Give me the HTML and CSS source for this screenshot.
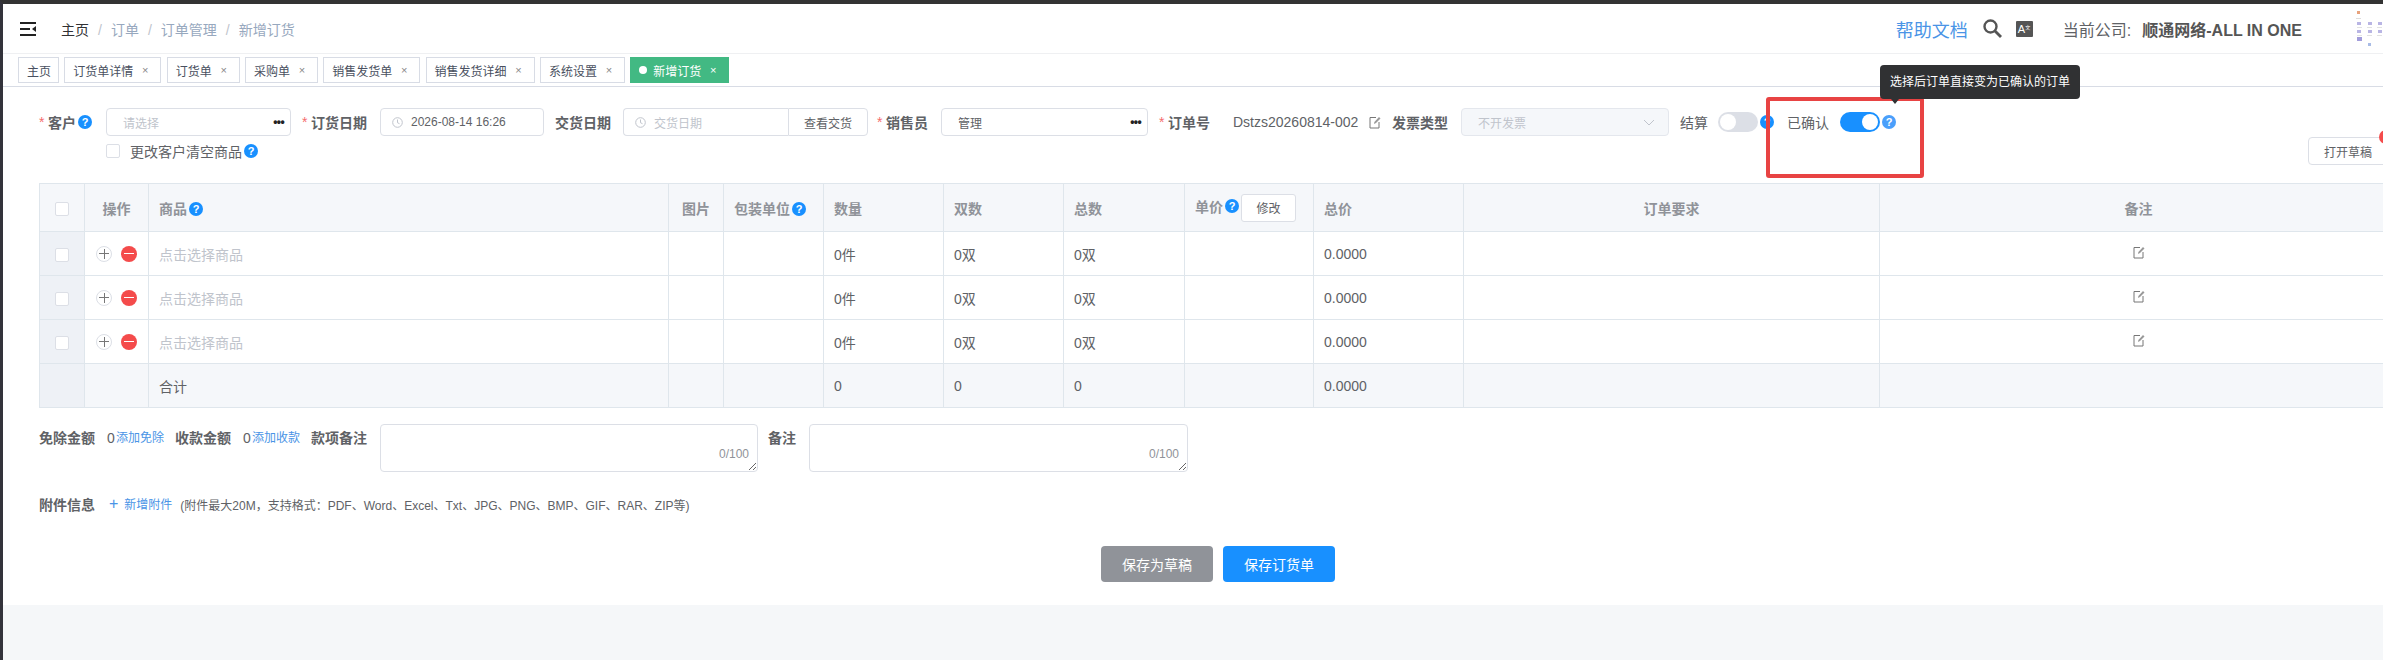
FILE: index.html
```html
<!DOCTYPE html>
<html lang="zh-CN">
<head>
  <meta charset="UTF-8" />
  <title>新增订货</title>
  <link rel="stylesheet" href="styles.css">
</head>
<body>
<div class="app">

  <!-- Top bar -->
  <header class="navbar">
    <svg class="hamburger" width="16" height="14" viewBox="0 0 16 14"><path d="M0 1h16M0 7h10M0 13h16" stroke="#222" stroke-width="2" fill="none"/><path d="M16 4v6l-4-3z" fill="#222"/></svg>
    <div class="crumbs">
      <span class="crumb-home">主页</span><i>/</i><span>订单</span><i>/</i><span>订单管理</span><i>/</i><span>新增订货</span>
    </div>
    <div class="nav-right">
      <a class="help-link">帮助文档</a>
      <svg class="search-icon" width="19" height="19" viewBox="0 0 19 19"><circle cx="7.5" cy="7.5" r="6" stroke="#555" stroke-width="2.4" fill="none"/><path d="M12 12l6 6" stroke="#555" stroke-width="2.8"/></svg>
      <div class="size-icon">A<sup>文</sup></div>
      <span class="company-label">当前公司:</span>
      <span class="company-name">顺通网络-ALL IN ONE</span>
      <svg class="avatar" width="29" height="38" viewBox="0 0 29 38">
        <rect x="3" y="1" width="3" height="3" fill="#e8a27c"/>
        <rect x="2" y="8" width="5" height="1" fill="#ddd"/>
        <rect x="3" y="12" width="4" height="3" fill="#b9b5e4"/><rect x="14" y="12" width="4" height="3" fill="#b9b5e4"/><rect x="24" y="12" width="4" height="3" fill="#b9b5e4"/>
        <rect x="3" y="17" width="5" height="1" fill="#e2e2e2"/><rect x="13" y="17" width="5" height="1" fill="#e2e2e2"/><rect x="23" y="17" width="5" height="1" fill="#e2e2e2"/>
        <rect x="3" y="20" width="4" height="3" fill="#b9b5e4"/><rect x="14" y="20" width="4" height="3" fill="#b9b5e4"/><rect x="24" y="20" width="4" height="3" fill="#b9b5e4"/>
        <rect x="3" y="25" width="5" height="1" fill="#e2e2e2"/><rect x="13" y="25" width="5" height="1" fill="#e2e2e2"/><rect x="23" y="25" width="5" height="1" fill="#e2e2e2"/>
        <rect x="3" y="27" width="5" height="4" fill="#a29ddb"/><rect x="14" y="33" width="3" height="3" fill="#a9bce6"/>
      </svg>
    </div>
  </header>

  <!-- Opened pages -->
  <div class="tabs">
    <span class="tab">主页</span>
    <span class="tab">订货单详情<b>×</b></span>
    <span class="tab">订货单<b>×</b></span>
    <span class="tab">采购单<b>×</b></span>
    <span class="tab">销售发货单<b>×</b></span>
    <span class="tab">销售发货详细<b>×</b></span>
    <span class="tab">系统设置<b>×</b></span>
    <span class="tab active"><em></em>新增订货<b>×</b></span>
  </div>

  <main class="content">
    <div class="form-row">
      <div class="field">
        <label class="lb w67"><i>*</i>客户<span class="tip">?</span></label>
        <div class="input w185"><span class="ph">请选择</span><span class="more">•••</span></div>
      </div>
      <div class="field">
        <label class="lb w78"><i>*</i>订货日期</label>
        <div class="input date w164">
          <svg width="11" height="11" viewBox="0 0 11 11"><circle cx="5.5" cy="5.5" r="4.8" stroke="#c0c4cc" fill="none"/><path d="M5.5 2.5v3.2l2 1" stroke="#c0c4cc" fill="none"/></svg>
          <span>2026-08-14 16:26</span>
        </div>
      </div>
      <div class="field mr9">
        <label class="lb w68 plain-start">交货日期</label>
        <div class="input date w165 joined">
          <svg width="11" height="11" viewBox="0 0 11 11"><circle cx="5.5" cy="5.5" r="4.8" stroke="#c0c4cc" fill="none"/><path d="M5.5 2.5v3.2l2 1" stroke="#c0c4cc" fill="none"/></svg>
          <span class="ph">交货日期</span>
        </div>
        <button class="btn-append">查看交货</button>
      </div>
      <div class="field">
        <label class="lb w64"><i>*</i>销售员</label>
        <div class="input w207"><span class="val">管理</span><span class="more">•••</span></div>
      </div>
      <div class="field mr0">
        <label class="lb w74"><i>*</i>订单号</label>
        <div class="order-no">Dstzs20260814-002
          <svg class="edit" width="12" height="13" viewBox="0 0 12 13"><path d="M7 1.5H1v10.500h9V6" stroke="#777" fill="none"/><path d="M5 8l.4-2L10 1l1.500 1.500L7 7z" fill="#999"/></svg>
        </div>
      </div>
      <div class="field">
        <label class="lb w69 plain-start">发票类型</label>
        <div class="input disabled w208"><span class="ph">不开发票</span>
          <svg width="12" height="7" viewBox="0 0 12 7"><path d="M1 1l5 5 5-5" stroke="#c0c4cc" fill="none"/></svg>
        </div>
      </div>
      <div class="field mr13">
        <span class="sw-label w38">结算</span>
        <span class="switch"></span>
        <span class="tip">?</span>
      </div>
      <div class="field">
        <span class="sw-label w53">已确认</span>
        <span class="switch on"></span>
        <span class="tip light">?</span>
      </div>
    </div>

    <div class="form-row second">
      <label class="check-line"><span class="checkbox"></span>更改客户清空商品<span class="tip">?</span></label>
      <button class="btn-draft">打开草稿</button>
    </div>

    <table class="grid">
      <colgroup>
        <col class="c1"><col class="c2"><col class="c3"><col class="c4"><col class="c5"><col class="c6">
        <col class="c7"><col class="c8"><col class="c9"><col class="c10"><col class="c11"><col class="c12">
      </colgroup>
      <thead>
        <tr>
          <th class="center"><span class="checkbox"></span></th>
          <th class="center">操作</th>
          <th>商品<span class="tip">?</span></th>
          <th class="center">图片</th>
          <th>包装单位<span class="tip">?</span></th>
          <th>数量</th>
          <th>双数</th>
          <th>总数</th>
          <th>单价<span class="tip">?</span><button class="btn-edit">修改</button></th>
          <th>总价</th>
          <th class="center">订单要求</th>
          <th class="center">备注</th>
        </tr>
      </thead>
      <tbody>
        <tr>
          <td class="center side"><span class="checkbox"></span></td>
          <td><div class="ops"><span class="op-add"></span><span class="op-del"></span></div></td>
          <td class="ph">点击选择商品</td><td></td><td></td>
          <td>0件</td><td>0双</td><td>0双</td><td></td><td>0.0000</td><td></td>
          <td class="center"><svg class="edit" width="12" height="13" viewBox="0 0 12 13"><path d="M7 1.5H1v10.500h9V6" stroke="#777" fill="none"/><path d="M5 8l.4-2L10 1l1.500 1.500L7 7z" fill="#999"/></svg></td>
        </tr>
        <tr>
          <td class="center side"><span class="checkbox"></span></td>
          <td><div class="ops"><span class="op-add"></span><span class="op-del"></span></div></td>
          <td class="ph">点击选择商品</td><td></td><td></td>
          <td>0件</td><td>0双</td><td>0双</td><td></td><td>0.0000</td><td></td>
          <td class="center"><svg class="edit" width="12" height="13" viewBox="0 0 12 13"><path d="M7 1.5H1v10.500h9V6" stroke="#777" fill="none"/><path d="M5 8l.4-2L10 1l1.500 1.500L7 7z" fill="#999"/></svg></td>
        </tr>
        <tr>
          <td class="center side"><span class="checkbox"></span></td>
          <td><div class="ops"><span class="op-add"></span><span class="op-del"></span></div></td>
          <td class="ph">点击选择商品</td><td></td><td></td>
          <td>0件</td><td>0双</td><td>0双</td><td></td><td>0.0000</td><td></td>
          <td class="center"><svg class="edit" width="12" height="13" viewBox="0 0 12 13"><path d="M7 1.5H1v10.500h9V6" stroke="#777" fill="none"/><path d="M5 8l.4-2L10 1l1.500 1.500L7 7z" fill="#999"/></svg></td>
        </tr>
        <tr class="total">
          <td class="side"></td><td></td><td>合计</td><td></td><td></td>
          <td>0</td><td>0</td><td>0</td><td></td><td>0.0000</td><td></td><td></td>
        </tr>
      </tbody>
    </table>

    <div class="money-row">
      <span class="lb-strong w68">免除金额</span><span class="num">0</span><a class="link w59">添加免除</a>
      <span class="lb-strong w68">收款金额</span><span class="num">0</span><a class="link w59">添加收款</a>
      <span class="lb-strong w69">款项备注</span>
      <div class="ta-wrap w378"><textarea></textarea><span class="count">0/100</span></div>
      <span class="lb-strong w41">备注</span>
      <div class="ta-wrap w379"><textarea></textarea><span class="count">0/100</span></div>
    </div>

    <div class="attach-row">
      <span class="lb-strong w70">附件信息</span>
      <a class="link add-file"><span>+</span>新增附件</a>
      <span class="attach-note">(附件最大20M，支持格式：PDF、Word、Excel、Txt、JPG、PNG、BMP、GIF、RAR、ZIP等)</span>
    </div>

    <div class="actions">
      <button class="btn-gray">保存为草稿</button>
      <button class="btn-blue">保存订货单</button>
    </div>
  </main>

  <div class="band"></div>

  <!-- Overlays -->
  <div class="tooltip">选择后订单直接变为已确认的订单</div>
  <div class="mark"></div>
  <span class="badge"></span>
</div>
</body>
</html>
```

FILE: styles.css
```css
* {
  box-sizing: border-box;
}

html, body {
  margin: 0;
  height: 100%;
  overflow: hidden;
}

body {
  font-family: "Liberation Sans", "Noto Sans CJK SC", sans-serif;
  font-size: 14px;
  color: #606266;
  background: #fff;
}

.app {
  position: relative;
  display: flex;
  flex-direction: column;
  width: 2383px;
  height: 660px;
  border-top: 4px solid #333;
  border-left: 3px solid #33333b;
  overflow: hidden;
}

/* top bar */
.navbar {
  display: flex;
  align-items: center;
  flex: none;
  height: 50px;
  padding-left: 17px;
  border-bottom: 1px solid #eff0f2;
}

.crumbs {
  display: flex;
  align-items: baseline;
  margin-left: 25px;
  color: #97a8be;
}

.crumbs i {
  margin: 0 9px;
  font-style: normal;
  color: #c0c4cc;
}

.crumb-home {
  color: #303133;
}

.nav-right {
  display: flex;
  align-items: center;
  margin-left: auto;
}

.help-link {
  font-size: 18px;
  color: #4a94e6;
}

.search-icon {
  margin-left: 15px;
}

.size-icon {
  width: 17px;
  height: 16px;
  margin-left: 14px;
  border-radius: 1px;
  background: #555;
  color: #fff;
  font-size: 11px;
  line-height: 16px;
  padding-left: 2px;
  overflow: hidden;
}

.size-icon sup {
  font-size: 5px;
  line-height: 0;
  vertical-align: 4px;
}

.company-label {
  margin-left: 30px;
  font-size: 16px;
  color: #606266;
}

.company-name {
  margin-left: 11px;
  font-size: 16px;
  font-weight: 700;
  color: #555;
}

.avatar {
  margin-left: 52px;
}

/* tabs */
.tabs {
  display: flex;
  align-items: center;
  gap: 5.3px;
  flex: none;
  height: 33px;
  padding-left: 15px;
  border-bottom: 1px solid #d8dce5;
  background: #fff;
}

.tab {
  display: flex;
  align-items: center;
  height: 26px;
  padding: 0 7px 0 8px;
  border: 1px solid #d8dce5;
  font-size: 12px;
  color: #495060;
  white-space: nowrap;
}

.tab b {
  width: 16px;
  margin-left: 4px;
  font-size: 11px;
  font-weight: 400;
  text-align: center;
  color: #888;
}

.tab.active {
  border-color: #42b983;
  background: #42b983;
  color: #fff;
}

.tab.active b {
  color: #fff;
}

.tab em {
  width: 8px;
  height: 8px;
  margin-right: 6px;
  border-radius: 50%;
  background: #fff;
}

/* form */
.content {
  flex: none;
  height: 518px;
  padding: 21px 0 0 36px;
  background: #fff;
}

.form-row {
  display: flex;
  align-items: center;
  height: 28px;
}

.form-row.second {
  margin-top: 1px;
  padding-left: 67px;
}

.field {
  display: flex;
  align-items: center;
  flex: none;
  margin-right: 11px;
}

.mr9 { margin-right: 9px; }
.mr0 { margin-right: 0; }
.mr13 { margin-right: 13px; }

.w38 { width: 38px; }
.w41 { width: 41px; }
.w53 { width: 53px; }
.w59 { width: 59px; }
.w64 { width: 64px; }
.w67 { width: 67px; }
.w68 { width: 68px; }
.w69 { width: 69px; }
.w70 { width: 70px; }
.w74 { width: 74px; }
.w78 { width: 78px; }
.w164 { width: 164px; }
.w165 { width: 165px; }
.w185 { width: 185px; }
.w207 { width: 207px; }
.w208 { width: 208px; }
.w378 { width: 378px; }
.w379 { width: 379px; }

.lb {
  display: flex;
  align-items: center;
  flex: none;
  font-weight: 700;
  color: #606266;
}

.lb i {
  width: 9px;
  font-style: normal;
  font-weight: 400;
  color: #f56c6c;
}

.sw-label {
  flex: none;
  color: #606266;
}

.tip {
  display: inline-block;
  flex: none;
  width: 14px;
  height: 14px;
  margin-left: 2px;
  border-radius: 50%;
  background: #1890ff;
  color: #fff;
  font-size: 11px;
  font-weight: 700;
  line-height: 14px;
  text-align: center;
  vertical-align: 1px;
}

.tip.light {
  background: #4a9ffb;
}

.input {
  display: flex;
  align-items: center;
  justify-content: space-between;
  flex: none;
  height: 28px;
  padding: 0 6px 0 16px;
  border: 1px solid #dcdfe6;
  border-radius: 4px;
  background: #fff;
  font-size: 12px;
  color: #606266;
}

.input.date {
  justify-content: flex-start;
  gap: 8px;
  padding-left: 11px;
}

.input.joined {
  border-radius: 4px 0 0 4px;
  border-right: 0;
}

.input.disabled {
  padding-right: 13px;
  background: #f5f7fa;
  border-color: #e4e7ed;
}

.ph {
  color: #c0c4cc;
}

.more {
  font-size: 12px;
  font-weight: 700;
  letter-spacing: -0.6px;
  color: #222;
}

button {
  font-family: inherit;
  cursor: pointer;
}

.btn-append {
  width: 80px;
  height: 28px;
  padding: 0;
  border: 1px solid #dcdfe6;
  border-radius: 0 4px 4px 0;
  background: #fff;
  font-size: 12px;
  color: #606266;
}

.order-no {
  display: flex;
  align-items: center;
  justify-content: space-between;
  width: 148px;
  margin-right: 11px;
}

.switch {
  position: relative;
  flex: none;
  width: 40px;
  height: 20px;
  border-radius: 10px;
  background: #dcdfe6;
}

.switch::after {
  content: "";
  position: absolute;
  top: 2px;
  left: 2px;
  width: 16px;
  height: 16px;
  border-radius: 50%;
  background: #fff;
}

.switch.on {
  background: #1890ff;
}

.switch.on::after {
  left: 22px;
}

.check-line {
  display: flex;
  align-items: center;
  color: #606266;
}

.checkbox {
  display: inline-block;
  width: 14px;
  height: 14px;
  border: 1px solid #dcdfe6;
  border-radius: 2px;
  background: #fff;
  vertical-align: middle;
}

.check-line .checkbox {
  margin-right: 10px;
}

.btn-draft {
  flex: none;
  width: 80px;
  height: 28px;
  margin-left: auto;
  margin-right: -5px;
  padding: 0;
  border: 1px solid #dcdfe6;
  border-radius: 4px;
  background: #fff;
  font-size: 12px;
  color: #606266;
}

/* table */
.grid {
  table-layout: fixed;
  width: 2358px;
  margin-top: 18px;
  border-collapse: collapse;
  border: 1px solid #dfe6ec;
  border-right: 0;
}

.c1 { width: 45px; }
.c2 { width: 64px; }
.c3 { width: 520px; }
.c4 { width: 55px; }
.c5 { width: 100px; }
.c6 { width: 120px; }
.c7 { width: 120px; }
.c8 { width: 121px; }
.c9 { width: 129px; }
.c10 { width: 150px; }
.c11 { width: 416px; }
.c12 { width: 518px; }

.grid th,
.grid td {
  padding: 0 10px;
  border: 1px solid #dfe6ec;
  font-weight: 400;
  text-align: left;
}

.grid th {
  height: 48px;
  background: #f5f7fa;
  font-weight: 700;
  color: #909399;
}

.grid td {
  height: 44px;
  color: #606266;
}

.grid th.center,
.grid td.center {
  padding: 0;
  text-align: center;
}

.grid td.ph {
  color: #c0c4cc;
}

.grid td.side {
  background: #eef1f6;
}

.total td {
  background: #f5f7fa;
}

.ops {
  display: flex;
  gap: 9px;
  margin-left: 1px;
}

.op-add,
.op-del {
  position: relative;
  flex: none;
  width: 16px;
  height: 16px;
  border-radius: 50%;
}

.op-add {
  border: 1px solid #dcdfe6;
  background:
    linear-gradient(#777, #777) center / 10px 1px no-repeat,
    linear-gradient(#777, #777) center / 1px 10px no-repeat;
}

.op-del {
  background:
    linear-gradient(#fff, #fff) center / 10px 1px no-repeat,
    #f44b4b;
}

.btn-edit {
  width: 55px;
  height: 28px;
  margin-left: 2px;
  padding: 0;
  border: 1px solid #dcdfe6;
  border-radius: 3px;
  background: #fff;
  font-size: 12px;
  color: #606266;
  vertical-align: middle;
}

/* totals + notes */
.money-row {
  display: flex;
  align-items: flex-start;
  height: 48px;
  margin-top: 16px;
  line-height: 28px;
}

.lb-strong {
  flex: none;
  font-weight: 700;
  color: #606266;
}

.num {
  flex: none;
  width: 9px;
}

.link {
  flex: none;
  font-size: 12px;
  color: #4a94e6;
}

.ta-wrap {
  position: relative;
  flex: none;
  height: 48px;
}

.ta-wrap textarea {
  display: block;
  width: 100%;
  height: 48px;
  border: 1px solid #dcdfe6;
  border-radius: 4px;
  background: #fff;
  outline: 0;
}

.ta-wrap + .lb-strong {
  margin-left: 10px;
}

.count {
  position: absolute;
  right: 9px;
  bottom: 11px;
  font-size: 12px;
  line-height: 14px;
  color: #909399;
}

.attach-row {
  display: flex;
  align-items: center;
  height: 20px;
  margin-top: 22px;
}

.add-file span {
  margin-right: 6px;
  font-size: 16px;
}

.attach-note {
  margin-left: 8px;
  font-size: 12px;
  color: #606266;
}

.actions {
  display: flex;
  gap: 10px;
  margin-top: 32px;
  padding-left: 1062px;
}

.actions button {
  width: 112px;
  height: 36px;
  padding: 0;
  border: 0;
  border-radius: 4px;
  font-size: 14px;
  color: #fff;
}

.btn-gray {
  background: #909399;
}

.btn-blue {
  background: #1890ff;
}

.band {
  flex: 1;
  background: #f5f7f9;
}

/* overlays */
.tooltip {
  position: absolute;
  top: 61px;
  left: 1877px;
  width: 200px;
  height: 34px;
  border-radius: 4px;
  background: #303133;
  color: #fff;
  font-size: 12px;
  line-height: 34px;
  text-align: center;
  z-index: 3;
}

.tooltip::after {
  content: "";
  position: absolute;
  top: 100%;
  left: 11px;
  border: 4px solid transparent;
  border-top: 5px solid #303133;
}

.mark {
  position: absolute;
  top: 93px;
  left: 1763px;
  width: 158px;
  height: 81px;
  border: 4px solid #e84343;
  border-radius: 3px;
  z-index: 2;
}

.badge {
  position: absolute;
  top: 126px;
  left: 2376px;
  width: 14px;
  height: 14px;
  border-radius: 50%;
  background: #f44b4b;
  z-index: 2;
}
```
